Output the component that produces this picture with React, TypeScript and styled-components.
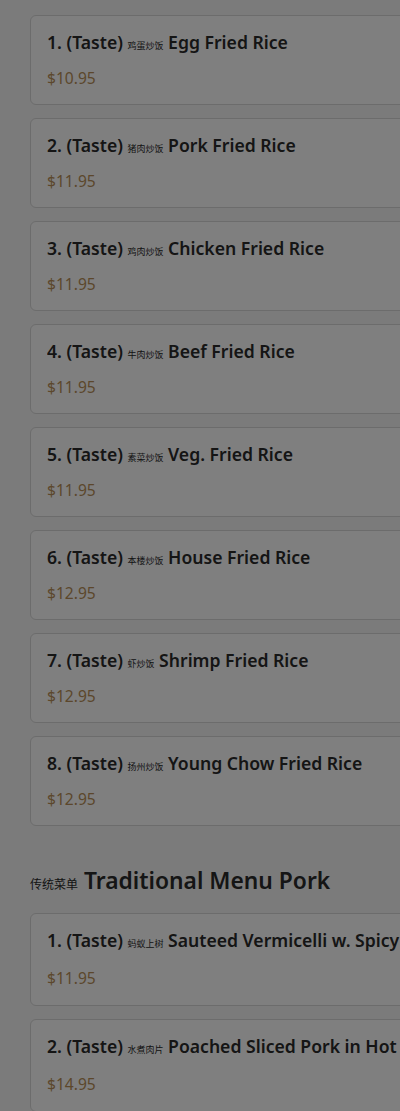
import React from 'react'
import styled, { createGlobalStyle } from 'styled-components'

const GlobalStyle = createGlobalStyle`
    html, body {
        margin: 0;
        padding: 0;
        background: #f6f6f6;
        overflow: hidden;
    }
    body {
        font-family: "Noto Sans", "Noto Sans CJK SC", sans-serif;
        color: #2a2a2a;
    }
`

const SPage = styled.main`
    width: 440px;
    padding: 15px 0 40px 30px;
`

const SSection = styled.section`
    display: flex;
    flex-direction: column;
    gap: 13px;
`

const SHeading = styled.h2`
    margin: 40px 0 17px;
    font-size: 22.8px;
    line-height: 30px;
    font-weight: 600;
    color: #2a2a2a;
    white-space: nowrap;
`

const SCard = styled.article<{ $roomy?: boolean }>`
    background: #fff;
    border: 1px solid #d8d8d8;
    border-radius: 6px;
    padding: ${p => (p.$roomy ? '14px 16px 17px' : '14px 16px 16px')};
    display: flex;
    flex-direction: column;
    gap: ${p => (p.$roomy ? '16px' : '14px')};
`

const STitle = styled.h3`
    margin: 0;
    font-size: 17.6px;
    line-height: 24px;
    height: 24px;
    font-weight: 600;
    white-space: nowrap;
    overflow: hidden;
`

const SHan = styled.span`
    font-family: "Noto Sans CJK SC", sans-serif;
    font-size: 9px;
    line-height: 0;
    font-weight: 400;
`

const SHeadHan = styled(SHan)`
    font-size: 12px;
`

const SPrice = styled.div`
    font-size: 15.6px;
    line-height: 20px;
    color: #b88f58;
`

const SOverlay = styled.div`
    position: fixed;
    inset: 0;
    background: rgba(0, 0, 0, 0.5);
`

type Dish = { no: number; han: string; name: string; price: string }

const friedRice: Dish[] = [
    { no: 1, han: '鸡蛋炒饭', name: 'Egg Fried Rice', price: '$10.95' },
    { no: 2, han: '猪肉炒饭', name: 'Pork Fried Rice', price: '$11.95' },
    { no: 3, han: '鸡肉炒饭', name: 'Chicken Fried Rice', price: '$11.95' },
    { no: 4, han: '牛肉炒饭', name: 'Beef Fried Rice', price: '$11.95' },
    { no: 5, han: '素菜炒饭', name: 'Veg. Fried Rice', price: '$11.95' },
    { no: 6, han: '本楼炒饭', name: 'House Fried Rice', price: '$12.95' },
    { no: 7, han: '虾炒饭', name: 'Shrimp Fried Rice', price: '$12.95' },
    { no: 8, han: '扬州炒饭', name: 'Young Chow Fried Rice', price: '$12.95' },
]

const pork: Dish[] = [
    { no: 1, han: '蚂蚁上树', name: 'Sauteed Vermicelli w. Spicy', price: '$11.95' },
    { no: 2, han: '水煮肉片', name: 'Poached Sliced Pork in Hot', price: '$14.95' },
]

const DishCard = ({ dish, roomy }: { dish: Dish; roomy?: boolean }) => (
    <SCard $roomy={roomy}>
        <STitle>
            {dish.no}. (Taste) <SHan>{dish.han}</SHan> {dish.name}
        </STitle>
        <SPrice>{dish.price}</SPrice>
    </SCard>
)

export default function App() {
    return (
        <>
            <GlobalStyle />
            <SPage>
                <SSection>
                    {friedRice.map(d => (
                        <DishCard key={d.no} dish={d} />
                    ))}
                </SSection>
                <SHeading>
                    <SHeadHan>传统菜单</SHeadHan> Traditional Menu Pork
                </SHeading>
                <SSection>
                    {pork.map(d => (
                        <DishCard key={d.no} dish={d} roomy />
                    ))}
                </SSection>
            </SPage>
            <SOverlay />
        </>
    )
}
